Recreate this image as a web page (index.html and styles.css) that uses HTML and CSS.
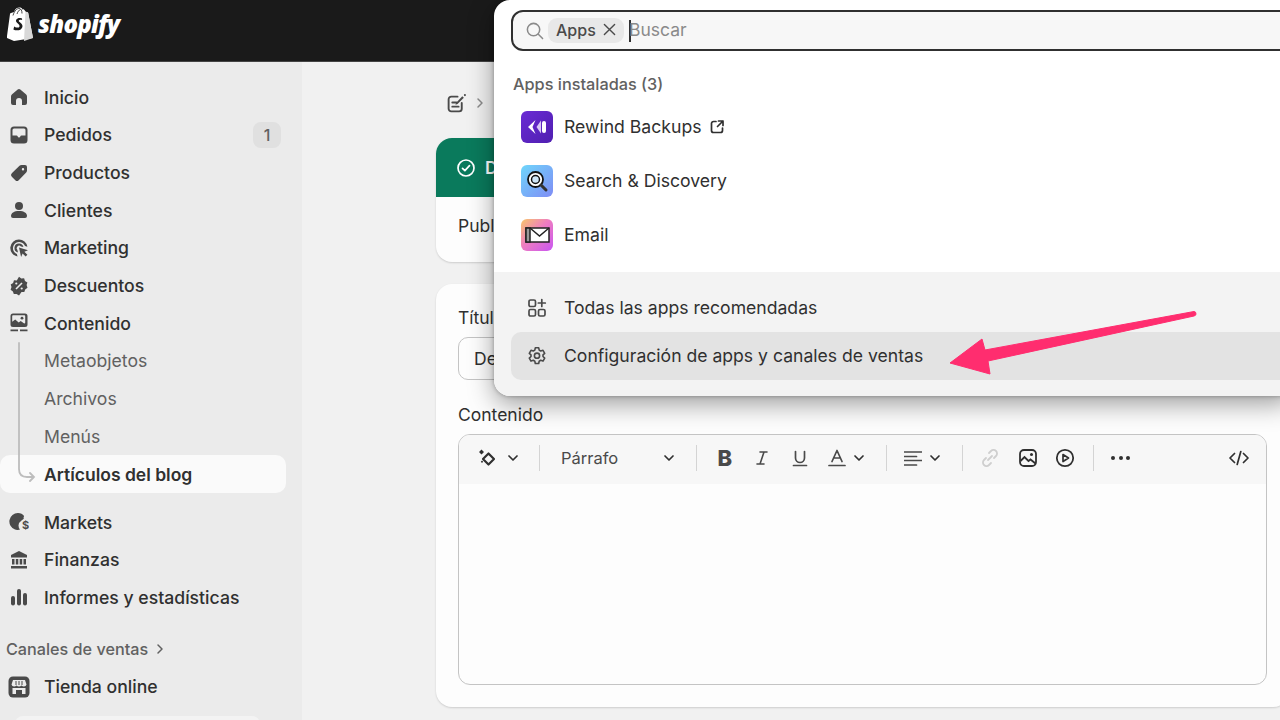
FILE: index.html
```html
<!DOCTYPE html>
<html lang="es">
<head>
<meta charset="utf-8">
<title>Shopify</title>
<link rel="stylesheet" href="styles.css">
</head>
<body>
<header class="topbar">
  <svg class="bag" viewBox="0 0 30 34"><path d="M2 29 5 7q.2-1 1-1l3-1C10 2 12 .6 14.500.600c1.500 0 2.500.6 3 1.900l1.300-.3L21 5l1.500.2q.6 0 .7.8L28 31 9 34 2 31Z" fill="#fff"/><path d="M20.500 4.500 19 34l9-3-4.800-25q-.1-.8-.7-.8Z" fill="#d8d8d8"/><path d="M8 8.500C9.500 3.500 12 1.500 14 1.500c2 0 3 2 3 5M12 7c.8-2.500 2-4 3.500-4.500" fill="none" stroke="#1a1a1a" stroke-width=".8"/><path d="M17 11.500c-1-.6-4.500-1.200-5.800 1.300-1.400 3 4 4 3.300 6.600-.5 1.800-3.300 1.400-5.300 0l-.8 3c2.500 1.500 7.800 1.500 9-2.500 1-3.800-4.200-4.700-3.600-6.500.3-1 2-.9 3.300-.3Z" fill="#1a1a1a"/></svg>
  <span class="wordmark">shopify</span>
</header>
<div class="workspace">
  <nav class="sidebar">
    <a class="nav-row"><svg class="ico" viewBox="0 0 20 20"><path d="M8.700 2.500a2 2 0 0 1 2.600 0l5.600 4.700q1.100 1 1.100 2.300V16a2 2 0 0 1-2 2h-3v-4a3 3 0 0 0-6 0v4H4a2 2 0 0 1-2-2V9.500q0-1.300 1.100-2.300Z"/></svg>Inicio</a>
    <a class="nav-row"><svg class="ico" viewBox="0 0 20 20"><path fill-rule="evenodd" d="M5 1.500h10a3.500 3.500 0 0 1 3.500 3.500v10a3.500 3.500 0 0 1-3.500 3.500H5A3.500 3.500 0 0 1 1.500 15V5A3.500 3.500 0 0 1 5 1.500Zm0 2A1.500 1.500 0 0 0 3.500 5v5.500h4c.6 0 1 .4 1.200 1 .2.600.7 1 1.300 1s1.100-.4 1.300-1c.2-.6.6-1 1.200-1h4V5A1.500 1.500 0 0 0 15 3.500Z"/></svg>Pedidos<span class="badge">1</span></a>
    <a class="nav-row"><svg class="ico" viewBox="0 0 20 20"><path fill-rule="evenodd" d="M12.500 2H16a2 2 0 0 1 2 2v3.500q0 1.200-.8 2l-7.500 7.700a2.400 2.400 0 0 1-3.400 0l-3.500-3.500a2.400 2.400 0 0 1 0-3.400l7.700-7.500q.8-.8 2-.8Zm1.500 3a1.200 1.200 0 1 0 0 2.400A1.200 1.200 0 0 0 14 5Z"/></svg>Productos</a>
    <a class="nav-row"><svg class="ico" viewBox="0 0 20 20"><circle cx="10" cy="6" r="4"/><path d="M2 16c0-3 3-5 8-5s8 2 8 5q0 2-2 2H4q-2 0-2-2Z"/></svg>Clientes</a>
    <a class="nav-row"><svg class="ico" viewBox="0 0 20 20"><path d="M10 1.500a8.500 8.500 0 0 0-1.500 16.900l-.6-2.400A6.200 6.200 0 1 1 16 8.100l2.400.6A8.500 8.500 0 0 0 10 1.500Z"/><path d="M10 5.500a4.500 4.500 0 0 0-1 8.900l-.6-2.500a2.200 2.200 0 1 1 3.500-3.500l2.500.6A4.500 4.500 0 0 0 10 5.500Z"/><path d="m10 9.500 9 2.700-3.600 1.500 3 3-1.800 1.800-3-3-1.500 3.600Z"/></svg>Marketing</a>
    <a class="nav-row"><svg class="ico" viewBox="0 0 20 20"><path fill-rule="evenodd" d="m10 .8 2.300 1.600 2.800-.2.9 2.700 2.400 1.500-.8 2.700.9 2.600-2.300 1.700-.9 2.700-2.800-.1L10 19.500l-2.400-1.500-2.800.1-.9-2.700-2.300-1.700.9-2.600-.8-2.700 2.400-1.500.9-2.700 2.800.2Z"/><path d="m7 13 6-6" stroke="#ebebeb" stroke-width="1.600"/><circle cx="7.300" cy="7.500" r="1.100" fill="#ebebeb"/><circle cx="12.700" cy="12.500" r="1.100" fill="#ebebeb"/></svg>Descuentos</a>
    <a class="nav-row strong"><svg class="ico" viewBox="0 0 20 20"><path fill-rule="evenodd" d="M4 .5h12A2.500 2.500 0 0 1 18.500 3v8.500A2.500 2.500 0 0 1 16 14H4a2.500 2.500 0 0 1-2.500-2.500V3A2.500 2.500 0 0 1 4 .5Zm0 1.800a.8.8 0 0 0-.8.800v5.700l3-2.300 3.500 3 2-1.500 3.500 2.500q1-.1 1-1V3.100a.8.8 0 0 0-.8-.8Z"/><circle cx="13" cy="5.200" r="1.400"/><path d="M1.500 16.500h7.500v1.800H1.500ZM11 16.500h7.500v1.800H11Z"/></svg>Contenido</a>
    <div class="subnav">
      <svg class="tree" viewBox="0 0 36 140"><path d="M19 1v126q0 8 8 8h7m-4-4 4 4-4 4" fill="none" stroke="#bdbdbd" stroke-width="1.800" stroke-linecap="round"/></svg>
      <a class="nav-row sub">Metaobjetos</a>
      <a class="nav-row sub">Archivos</a>
      <a class="nav-row sub">Menús</a>
      <a class="nav-row sub active">Artículos del blog</a>
    </div>
    <div class="nav-group">
      <a class="nav-row"><svg class="ico" viewBox="0 0 20 20"><path d="M9 1a8.500 8.500 0 0 0-3 16.500l2 .5c1.500.2 2.500-.2 3-.5q-1.500-1.500-1.500-4 0-3 3-5l2-1.500q.5-.8 0-1.500l.6-1.500Q13 1 9 1Z"/><text class="dollar" x="13" y="17">$</text></svg>Markets</a>
      <a class="nav-row"><svg class="ico" viewBox="0 0 20 20"><path d="M10 1 2 5v2.500h16V5ZM3 9h2.500v5.500H3ZM6.800 9h2.500v5.500H6.800ZM10.700 9h2.500v5.500h-2.500ZM14.500 9H17v5.500h-2.500ZM2 16h16v2.500H2Z"/></svg>Finanzas</a>
      <a class="nav-row"><svg class="ico" viewBox="0 0 20 20"><rect x="2" y="9" width="4" height="9.500" rx="2"/><rect x="8" y="2" width="4" height="16.500" rx="2"/><rect x="14" y="6" width="4" height="12.500" rx="2"/></svg>Informes y estadísticas</a>
    </div>
    <div class="section-label">Canales de ventas<svg class="chev-r" viewBox="0 0 10 12"><path d="m3 2 4 4-4 4" fill="none" stroke="#616161" stroke-width="1.500" stroke-linecap="round" stroke-linejoin="round"/></svg></div>
    <a class="nav-row"><svg class="ico store" viewBox="0 0 22 22"><rect width="21" height="21" x=".5" y=".5" rx="4.500"/><path d="M5 4h12l1.500 4.500q-.5 2-2.500 2-1.500 0-2.500-1-1 1-2.500 1t-2.500-1q-1 1-2.500 1-2 0-2.500-2Z" fill="#ebebeb"/><path d="M8 5v4M11 5v4M14 5v4" stroke="#4a4a4a"/><path d="M4.500 12h13v6h-3.500v-4h-6v4H4.500Z" fill="#ebebeb"/></svg>Tienda online</a>
    <div class="nav-peek"></div>
  </nav>
  <main class="main">
    <div class="crumbs">
      <svg class="crumb-ico" viewBox="0 0 20 20"><path d="M15 9.500V15a2.500 2.500 0 0 1-2.500 2.500H5A2.500 2.500 0 0 1 2.500 15V6A2.500 2.500 0 0 1 5 3.500h6" fill="none" stroke="#4a4a4a" stroke-width="1.800" stroke-linecap="round"/><path d="M6 9h4M6 13h6" stroke="#4a4a4a" stroke-width="1.800" stroke-linecap="round"/><path d="m9.500 9.500 6-6.500 1.500 1.500-6 6-2 .6Z" fill="#4a4a4a"/><circle cx="18" cy="2" r="1" fill="#4a4a4a"/></svg>
      <svg class="crumb-chev" viewBox="0 0 10 12"><path d="m3 2 4 4-4 4" fill="none" stroke="#8a8a8a" stroke-width="1.500" stroke-linecap="round" stroke-linejoin="round"/></svg>
    </div>
    <section class="card status">
      <div class="status-head">
        <svg class="status-ico" viewBox="0 0 20 20"><circle cx="10" cy="10" r="8" fill="none" stroke="#fff" stroke-width="1.700"/><path d="m6.500 10.300 2.400 2.400 4.600-5" fill="none" stroke="#fff" stroke-width="1.700" stroke-linecap="round" stroke-linejoin="round"/></svg>
        <span>Detalles</span>
      </div>
      <div class="status-body">Publicado</div>
    </section>
    <section class="card form">
      <div class="label">Título</div>
      <div class="input">Descripción</div>
      <div class="label second">Contenido</div>
      <div class="editor">
        <div class="toolbar">
          <span class="tb ai"><svg class="t20" viewBox="0 0 20 20"><path d="m11.500 5.500 5.500 5.500-5.500 5.500L6 11Z" fill="none" stroke="#303030" stroke-width="2.200" stroke-linejoin="round"/><path d="m4.500 1.500 2.500 2.500-2.500 2.500L2 4ZM5 12.500l1.200 1.200L5 15l-1.200-1.300Z" fill="#303030"/></svg><svg class="chev" viewBox="0 0 14 14"><path d="m3 5 4 4 4-4" /></svg></span>
          <span class="sep first"></span>
          <span class="tb para">Párrafo<svg class="chev" viewBox="0 0 14 14"><path d="m3 5 4 4 4-4" /></svg></span>
          <span class="sep second-sep"></span>
          <span class="tb glyph bold">B</span>
          <span class="tb glyph"><svg class="t18" viewBox="0 0 18 18"><path d="M7 3h7M4 15h7M11 3 7 15" fill="none" stroke="#4a4a4a" stroke-width="1.600" stroke-linecap="round"/></svg></span>
          <span class="tb glyph"><svg class="t18" viewBox="0 0 18 18"><path d="M4.500 2.500V9a4.500 4.500 0 0 0 9 0V2.500M2.500 16.500h13" fill="none" stroke="#4a4a4a" stroke-width="1.700" stroke-linecap="round"/></svg></span>
          <span class="tb color"><svg class="t18" viewBox="0 0 18 18"><path d="M4 12.500 9 1.500l5 11M5.800 9h6.400M1 16.500h16" fill="none" stroke="#4a4a4a" stroke-width="1.700" stroke-linecap="round" stroke-linejoin="round"/></svg><svg class="chev" viewBox="0 0 14 14"><path d="m3 5 4 4 4-4" /></svg></span>
          <span class="sep third"></span>
          <span class="tb align"><svg class="t18" viewBox="0 0 18 18"><path d="M.5 3h17M.5 7.500h12M.5 11.500h17M.5 16h12" fill="none" stroke="#4a4a4a" stroke-width="1.700" stroke-linecap="round"/></svg><svg class="chev" viewBox="0 0 14 14"><path d="m3 5 4 4 4-4" /></svg></span>
          <span class="sep fourth"></span>
          <span class="tb glyph"><svg class="t20" viewBox="0 0 20 20"><path d="m8 12 4-4M9 5l2-2a3.500 3.500 0 0 1 5 5l-2 2M11 15l-2 2a3.500 3.500 0 0 1-5-5l2-2" fill="none" stroke="#cfcfcf" stroke-width="1.800" stroke-linecap="round"/></svg></span>
          <span class="tb glyph"><svg class="t20" viewBox="0 0 20 20"><rect x="2" y="2" width="16" height="16" rx="4" fill="none" stroke="#303030" stroke-width="1.800"/><path d="m2.500 13 4-4 4 4 2-1.500 5 4" fill="none" stroke="#303030" stroke-width="1.800"/><circle cx="13.500" cy="6.500" r="1.500" fill="#303030"/></svg></span>
          <span class="tb glyph"><svg class="t20" viewBox="0 0 20 20"><circle cx="10" cy="10" r="8.200" fill="none" stroke="#303030" stroke-width="1.800"/><path d="M8 6.500 13.500 10 8 13.500Z" fill="none" stroke="#303030" stroke-width="1.700" stroke-linejoin="round"/></svg></span>
          <span class="sep fifth"></span>
          <span class="tb dots"><i></i><i></i><i></i></span>
          <span class="tb code"><svg class="t20" viewBox="0 0 20 20"><path d="M5.500 5.500 1 10l4.500 4.500M14.500 5.500 19 10l-4.500 4.500M11.800 3.500 8.200 16.500" fill="none" stroke="#303030" stroke-width="1.700" stroke-linecap="round" stroke-linejoin="round"/></svg></span>
        </div>
      </div>
    </section>
  </main>
</div>
<div class="popup">
  <div class="popup-top">
    <div class="search">
      <svg class="search-ico" viewBox="0 0 20 20"><circle cx="9" cy="9" r="6.500" fill="none" stroke="#8a8a8a" stroke-width="1.600"/><path d="m14 14 4.500 4.500" stroke="#8a8a8a" stroke-width="1.600" stroke-linecap="round"/></svg>
      <span class="chip">Apps<svg class="chip-x" viewBox="0 0 14 14"><path d="m1.500 1.500 11 11M12.500 1.500l-11 11" stroke="#4a4a4a" stroke-width="1.500" stroke-linecap="round"/></svg></span>
      <span class="caret"></span>
      <span class="placeholder">Buscar</span>
    </div>
    <div class="pop-title">Apps instaladas (3)</div>
    <a class="app-row"><svg class="app" viewBox="0 0 32 32"><defs><linearGradient id="g1" x1="0" y1="0" x2="1" y2="1"><stop offset="0" stop-color="#6a2bd4"/><stop offset="1" stop-color="#4f1fb0"/></linearGradient></defs><rect width="32" height="32" rx="6" fill="url(#g1)"/><path d="M14.500 9 7 16l7.500 7-3-7Z" fill="#fff"/><path d="M20 9.500 15.500 16l4.500 6.500Z" fill="#d9c8f7"/><rect x="21" y="10" width="4" height="12" rx="2" fill="#fff"/></svg>Rewind Backups<svg class="ext" viewBox="0 0 16 16"><path d="M7 2.500H4.500a2 2 0 0 0-2 2v7a2 2 0 0 0 2 2h7a2 2 0 0 0 2-2V9M9.500 2h4.500v4.500M14 2 8.500 7.500" fill="none" stroke="#303030" stroke-width="1.700" stroke-linecap="round" stroke-linejoin="round"/></svg></a>
    <a class="app-row"><svg class="app" viewBox="0 0 32 32"><defs><linearGradient id="g2" x1="0" y1="0" x2="1" y2="1"><stop offset="0" stop-color="#6fd6fb"/><stop offset="1" stop-color="#7f8cf5"/></linearGradient></defs><rect width="32" height="32" rx="6" fill="url(#g2)"/><circle cx="14.500" cy="14.500" r="7.500" fill="#fff" stroke="#111" stroke-width="1.800"/><circle cx="14.500" cy="14.500" r="4" fill="#cfe6f7" stroke="#111" stroke-width="1.500"/><path d="m20 20 5 5" stroke="#333" stroke-width="3" stroke-linecap="round"/></svg>Search &amp; Discovery</a>
    <a class="app-row"><svg class="app" viewBox="0 0 32 32"><defs><linearGradient id="g3" x1="0" y1="0" x2="1" y2="1"><stop offset="0" stop-color="#f8c76a"/><stop offset=".45" stop-color="#ef7ec0"/><stop offset="1" stop-color="#c955f2"/></linearGradient></defs><rect width="32" height="32" rx="6" fill="url(#g3)"/><rect x="5" y="9" width="23" height="14" fill="#fff" stroke="#222" stroke-width="1.500"/><rect x="5" y="9" width="4" height="14" fill="#999" stroke="#222" stroke-width="1.500"/><path d="m9 9 9.500 8L28 9" fill="none" stroke="#222" stroke-width="1.500"/></svg>Email</a>
  </div>
  <div class="popup-foot">
    <a class="foot-row"><svg class="foot-ico" viewBox="0 0 20 20"><g fill="none" stroke="#4a4a4a" stroke-width="1.700"><rect x="2" y="2" width="6.500" height="6.500" rx="1.500"/><rect x="2" y="11.500" width="6.500" height="6.500" rx="1.500"/><rect x="11.500" y="11.500" width="6.500" height="6.500" rx="1.500"/><path d="M14.800 1.500v7M11.300 5h7" stroke-linecap="round"/></g></svg>Todas las apps recomendadas</a>
    <a class="foot-row hover"><svg class="foot-ico" viewBox="0 0 20 20"><g fill="none" stroke="#4a4a4a" stroke-width="1.600" stroke-linejoin="round"><path d="M8.300 1.800h3.400l.5 2.300 1.500.9 2.300-.7 1.700 3-1.700 1.500v1.700l1.700 1.600-1.700 3-2.300-.8-1.500.9-.5 2.300H8.300l-.5-2.300-1.500-.9-2.300.8-1.700-3L4 10.500V8.800L2.300 7.300l1.700-3 2.300.7 1.500-.9Z"/><circle cx="10" cy="9.700" r="2.600"/></g></svg>Configuración de apps y canales de ventas</a>
  </div>
</div>
<svg class="arrow" viewBox="0 0 260 70"><path d="M10 53 42 29l3 11L254 1.500q2 0 2 2.500 0 1.500-2 2L48 51l2 13Z" fill="#ff2d6f" stroke="#ff2d6f" stroke-width="1" stroke-linejoin="round"/></svg>
</body>
</html>
```
FILE: styles.css
```css
* { box-sizing: border-box; }
html, body { margin: 0; height: 720px; overflow: hidden; }
body { font-family: Inter, "Liberation Sans", sans-serif; color: #303030; background: #f1f1f1; position: relative; }

.topbar { height: 62px; background: #1a1a1a; display: flex; align-items: flex-start; padding: 7px 0 0 5px; border-bottom: 1px solid #444; }
.bag { width: 30px; height: 34px; flex: none; }
.wordmark { font-family: "Open Sans", sans-serif; font-style: italic; font-weight: 800; font-size: 24px; letter-spacing: -.8px; color: #fff; line-height: 34px; margin-left: 3px; }

.workspace { display: flex; height: 658px; }
.sidebar { width: 302px; flex: none; background: #ebebeb; padding-top: 16.300px; overflow: hidden; }
.nav-row { display: flex; align-items: center; height: 37.700px; padding-left: 9px; font-size: 17.640px; font-weight: 500; color: #303030; position: relative; width: 286px; }
.ico { width: 20px; height: 20px; fill: #4a4a4a; margin-right: 15px; flex: none; }
.store { width: 22px; height: 22px; margin-left: -1px; margin-right: 14px; }
.dollar { font: 700 11px Inter, sans-serif; }
.badge { margin-left: auto; margin-right: 5px; width: 28px; height: 26px; border-radius: 8px; background: #e0e0e0; color: #616161; font-size: 16px; display: flex; align-items: center; justify-content: center; }
.subnav { position: relative; }
.sub { padding-left: 44px; color: #616161; font-weight: 400; }
.sub.active { color: #303030; font-weight: 600; font-size: 17.500px; background: #fafafa; border-radius: 10px; }
.tree { position: absolute; left: 0; top: 0; width: 36px; height: 140px; z-index: 1; }
.nav-group { margin-top: 10.300px; }
.section-label { display: flex; align-items: center; height: 22px; margin-top: 22px; margin-bottom: 7.500px; padding-left: 6px; font-size: 16.200px; font-weight: 500; color: #616161; }
.chev-r { width: 10px; height: 12px; margin-left: 7px; }
.nav-peek { margin: 11px 0 0 15px; width: 245px; height: 30px; background: #f3f3f3; border-radius: 8px; }

.main { flex: 1; min-width: 0; padding: 30px 0 0 134px; overflow: hidden; }
.crumbs { display: flex; align-items: center; height: 22px; margin-bottom: 24px; padding-left: 10px; }
.crumb-ico { width: 21px; height: 21px; }
.crumb-chev { width: 10px; height: 12px; margin-left: 8px; }
.card { width: 853px; background: #fdfdfd; border-radius: 16px; box-shadow: 0 1px 2px rgba(0,0,0,.15); }
.status { height: 124px; overflow: hidden; margin-bottom: 22px; }
.status-head { height: 59px; background: #0a7a5c; color: #fff; display: flex; align-items: center; padding-left: 20px; font-size: 17.500px; font-weight: 600; gap: 9px; }
.status-ico { width: 20px; height: 20px; }
.status-body { height: 65px; padding: 17px 0 0 22px; font-size: 17.500px; line-height: 24px; }
.form { height: 423px; padding: 23px 22px 22px; }
.label { height: 22px; font-size: 17.500px; line-height: 22px; margin-bottom: 8px; }
.label.second { margin-top: 24px; }
.input { height: 43px; border: 1px solid #c4c4c4; border-radius: 10px; padding-left: 15px; font-size: 17.500px; line-height: 41px; }
.editor { height: 251px; border: 1px solid #c4c4c4; border-radius: 12px; background: #fdfdfd; overflow: hidden; }
.toolbar { height: 49px; background: #f7f7f7; display: flex; align-items: center; padding: 0 0 3px 9px; }
.tb { display: flex; align-items: center; flex: none; }
.t18 { width: 18px; height: 18px; flex: none; }
.t20 { width: 20px; height: 20px; flex: none; }
.chev { width: 14px; height: 14px; flex: none; }
.chev path { fill: none; stroke: #303030; stroke-width: 1.700; stroke-linecap: round; stroke-linejoin: round; }
.ai { width: 60px; justify-content: center; gap: 9px; }
.sep { width: 1px; height: 26px; background: #d4d4d4; flex: none; }
.sep.first { margin-left: 11px; }
.para { width: 146px; padding: 0 10px 0 21px; justify-content: space-between; font-size: 16.500px; color: #4a4a4a; }
.sep.second-sep { margin-left: 10px; margin-right: 9px; }
.glyph { width: 37.500px; justify-content: center; }
.bold { font-size: 22px; font-weight: 800; color: #4a4a4a; }
.color { width: 56px; padding-left: 9px; gap: 6px; }
.sep.third { margin-left: 11px; margin-right: 17px; }
.align { width: 46px; gap: 6px; }
.sep.fourth { margin-left: 12px; margin-right: 9px; }
.sep.fifth { margin-left: 9px; margin-right: 17px; }
.dots { gap: 3.500px; }
.dots i { width: 4px; height: 4px; border-radius: 50%; background: #303030; }
.code { margin-left: auto; margin-right: 17px; }

.popup { position: absolute; left: 494px; top: 0; width: 800px; height: 396px; border-radius: 16px; background: #fff; box-shadow: 0 0 4px rgba(0,0,0,.3), 0 8px 26px rgba(0,0,0,.38); overflow: hidden; }
.popup-top { height: 272px; padding: 10px 0 0 17px; }
.search { width: 800px; height: 41px; border: 2px solid #303030; border-radius: 12px; background: #f7f7f7; display: flex; align-items: center; padding-left: 12px; }
.search-ico { width: 19px; height: 19px; flex: none; }
.chip { display: flex; align-items: center; height: 25px; margin-left: 4px; padding: 0 8px 2px 8px; width: 76px; background: #e8e8e8; border-radius: 9px; font-size: 16px; font-weight: 500; color: #4a4a4a; justify-content: space-between; }
.chip-x { width: 13px; height: 13px; }
.caret { width: 1.500px; height: 22px; background: #303030; margin-left: 5px; }
.placeholder { font-size: 17.500px; color: #8a8a8a; margin-left: -1.500px; padding-bottom: 2px; }
.pop-title { margin: 21px 0 0 2px; height: 24px; line-height: 24px; font-size: 16.300px; font-weight: 500; color: #616161; }
.app-row { display: flex; align-items: center; height: 54px; margin-top: -1px; margin-bottom: 1px; padding: 0 0 2px 10px; font-size: 17.620px; color: #303030; }
.app-row:first-of-type { margin-top: 4px; }
.app { width: 32px; height: 32px; margin: 2px 11px 0 0; flex: none; }
.ext { width: 16px; height: 16px; margin: 2px 0 0 8px; }
.popup-foot { height: 124px; background: #f3f3f3; padding: 12px 0 0 17px; }
.foot-row { display: flex; align-items: center; height: 48px; padding: 0 0 2px 16px; font-size: 17.600px; color: #303030; border-radius: 10px; }
.foot-row.hover { background: #e3e3e3; }
.foot-ico { width: 20px; height: 20px; margin: 2px 17px 0 0; flex: none; }

.arrow { position: absolute; left: 940px; top: 310px; width: 260px; height: 70px; }
```
